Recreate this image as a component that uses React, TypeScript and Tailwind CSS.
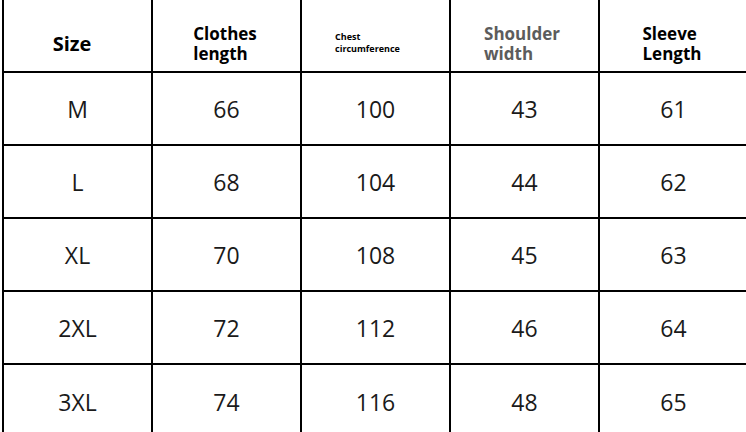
const headers = [
  { key: "size", node: <span className="text-[20px] font-bold text-black mt-[17px] mr-[11px]">Size</span> },
  {
    key: "clothes",
    node: (
      <span className="text-[17px] font-bold leading-[20px] text-black text-left mr-[3px] mt-[17px]">
        Clothes
        <br />
        length
      </span>
    ),
  },
  {
    key: "chest",
    node: (
      <span className="text-[9px] font-bold leading-[12px] text-black text-left mr-[16px] mt-[15px]">
        Chest
        <br />
        circumference
      </span>
    ),
  },
  {
    key: "shoulder",
    node: (
      <span className="text-[17px] font-bold leading-[20px] text-[#5c5c5c] text-left mr-[5px] mt-[17px]">
        Shoulder
        <br />
        width
      </span>
    ),
  },
  {
    key: "sleeve",
    node: (
      <span className="text-[17px] font-bold leading-[20px] text-black text-left mr-[3px] mt-[17px]">
        Sleeve
        <br />
        Length
      </span>
    ),
  },
];

const rows = [
  ["M", "66", "100", "43", "61"],
  ["L", "68", "104", "44", "62"],
  ["XL", "70", "108", "45", "63"],
  ["2XL", "72", "112", "46", "64"],
  ["3XL", "74", "116", "48", "65"],
];

export default function App() {
  return (
    <div
      className="w-[746px] h-[432px] overflow-hidden bg-white"
      style={{ fontFamily: '"Open Sans", "Noto Sans", sans-serif' }}
    >
      <div className="ml-[2px] grid grid-cols-[repeat(5,149px)]">
        {headers.map((h) => (
          <div
            key={h.key}
            className="h-[73px] flex items-center justify-center border-l-2 border-b-2 border-black"
          >
            {h.node}
          </div>
        ))}
        {rows.map((row, i) =>
          row.map((cell, j) => (
            <div
              key={`${i}-${j}`}
              className={`h-[73px] flex items-center justify-center border-l-2 border-black text-[23px] text-[#1a1a1a] pt-[1px] ${
                i < rows.length - 1 ? "border-b-2" : ""
              }`}
            >
              {cell}
            </div>
          ))
        )}
      </div>
    </div>
  );
}
